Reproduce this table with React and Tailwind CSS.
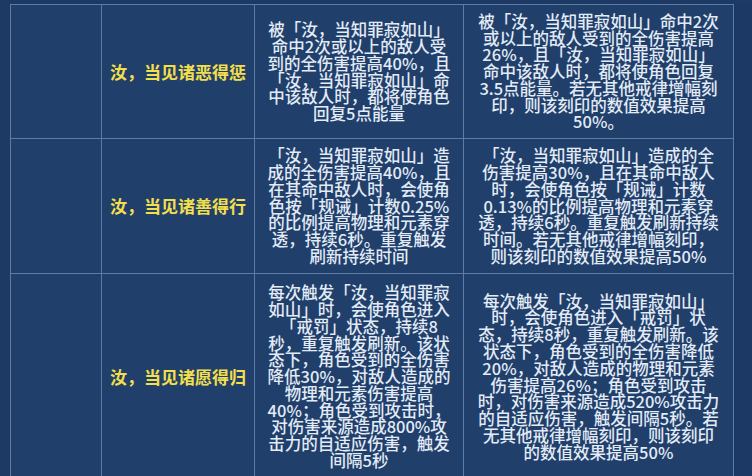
const rows = [
  {
    label: '汝，当见诸恶得惩',
    h: 'h-[134px]',
    base: [
      '被「汝，当知罪寂如山」',
      '命中2次或以上的敌人受',
      '到的全伤害提高40%，且',
      '「汝，当知罪寂如山」命',
      '中该敌人时，都将使角色',
      '回复5点能量',
    ],
    plus: [
      '被「汝，当知罪寂如山」命中2次',
      '或以上的敌人受到的全伤害提高',
      '26%，且「汝，当知罪寂如山」',
      '命中该敌人时，都将使角色回复',
      '3.5点能量。若无其他戒律增幅刻',
      '印，则该刻印的数值效果提高',
      '50%。',
    ],
  },
  {
    label: '汝，当见诸善得行',
    h: 'h-[135px]',
    base: [
      '「汝，当知罪寂如山」造',
      '成的全伤害提高40%，且',
      '在其命中敌人时，会使角',
      '色按「规诫」计数0.25%',
      '的比例提高物理和元素穿',
      '透，持续6秒。重复触发',
      '刷新持续时间',
    ],
    plus: [
      '「汝，当知罪寂如山」造成的全',
      '伤害提高30%，且在其命中敌人',
      '时，会使角色按「规诫」计数',
      '0.13%的比例提高物理和元素穿',
      '透，持续6秒。重复触发刷新持续',
      '时间。若无其他戒律增幅刻印，',
      '则该刻印的数值效果提高50%',
    ],
  },
  {
    label: '汝，当见诸愿得归',
    h: 'h-[206px]',
    base: [
      '每次触发「汝，当知罪寂',
      '如山」时，会使角色进入',
      '「戒罚」状态，持续8',
      '秒，重复触发刷新。该状',
      '态下，角色受到的全伤害',
      '降低30%，对敌人造成的',
      '物理和元素伤害提高',
      '40%；角色受到攻击时，',
      '对伤害来源造成800%攻',
      '击力的自适应伤害，触发',
      '间隔5秒',
    ],
    plus: [
      '每次触发「汝，当知罪寂如山」',
      '时，会使角色进入「戒罚」状',
      '态，持续8秒，重复触发刷新。该',
      '状态下，角色受到的全伤害降低',
      '20%，对敌人造成的物理和元素',
      '伤害提高26%；角色受到攻击',
      '时，对伤害来源造成520%攻击力',
      '的自适应伤害，触发间隔5秒。若',
      '无其他戒律增幅刻印，则该刻印',
      '的数值效果提高50%',
    ],
  },
]

function Lines({ lines }) {
  return (
    <div className="flex flex-col items-center text-center text-[16.5px] leading-[16.8px] font-medium text-[#e2ebf6] [text-spacing-trim:space-all]">
      {lines.map((l, i) => (
        <span key={i} className="whitespace-nowrap">
          {l}
        </span>
      ))}
    </div>
  )
}

export default function App() {
  return (
    <div
      className="flex h-[476px] w-[752px] overflow-hidden bg-[#1d3a64] pt-[4px]"
      style={{ fontFamily: '"Noto Sans CJK SC", "Liberation Sans", sans-serif' }}
    >
      <div className="w-[10px] shrink-0" />
      <div className="grid shrink-0 grid-cols-[91px_153px_209px_270px] border-l border-t border-[#5c7ca6] bg-[#213f6b]">
        {rows.map((r) => (
          <div key={r.label} className="contents">
            <div className={`${r.h} border-b border-r border-[#5c7ca6]`} />
            <div
              className={`${r.h} flex items-center justify-center border-b border-r border-[#5c7ca6] text-[17px] font-bold text-[#f2df4b] [text-spacing-trim:space-all]`}
            >
              {r.label}
            </div>
            <div
              className={`${r.h} flex items-center justify-center border-b border-r border-[#5c7ca6]`}
            >
              <Lines lines={r.base} />
            </div>
            <div
              className={`${r.h} flex items-center justify-center border-b border-r border-[#5c7ca6]`}
            >
              <Lines lines={r.plus} />
            </div>
          </div>
        ))}
      </div>
      <div className="flex-1 bg-[#1c3965]" />
    </div>
  )
}
